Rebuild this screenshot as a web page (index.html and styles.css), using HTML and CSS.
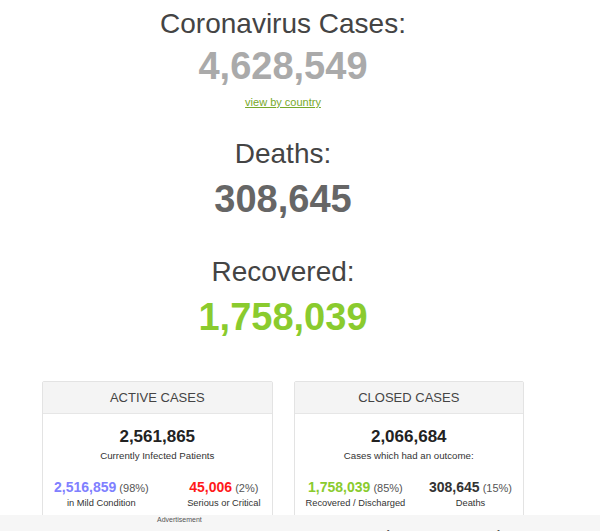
FILE: index.html
```html
<!DOCTYPE html>
<html lang="en">
<head>
<meta charset="utf-8">
<title>Coronavirus Cases</title>
<link rel="stylesheet" href="styles.css">
</head>
<body>
<main class="page">
  <section class="counter counter-cases">
    <h1 class="counter-title">Coronavirus Cases:</h1>
    <div class="counter-number number-cases">4,628,549</div>
    <a class="counter-link" href="#countries">view by country</a>
  </section>

  <section class="counter counter-deaths">
    <h1 class="counter-title">Deaths:</h1>
    <div class="counter-number number-deaths">308,645</div>
  </section>

  <section class="counter counter-recovered">
    <h1 class="counter-title">Recovered:</h1>
    <div class="counter-number number-recovered">1,758,039</div>
  </section>

  <div class="panels">
    <article class="panel">
      <header class="panel-head">ACTIVE CASES</header>
      <div class="panel-body">
        <div class="panel-total">2,561,865</div>
        <div class="panel-caption">Currently Infected Patients</div>
        <div class="panel-split">
          <div class="split-item">
            <div class="split-value"><span class="num num-mild">2,516,859</span> <span class="pct">(98%)</span></div>
            <div class="split-label">in Mild Condition</div>
          </div>
          <div class="split-item">
            <div class="split-value"><span class="num num-critical">45,006</span> <span class="pct">(2%)</span></div>
            <div class="split-label">Serious or Critical</div>
          </div>
        </div>
      </div>
    </article>

    <article class="panel">
      <header class="panel-head">CLOSED CASES</header>
      <div class="panel-body">
        <div class="panel-total">2,066,684</div>
        <div class="panel-caption">Cases which had an outcome:</div>
        <div class="panel-split">
          <div class="split-item">
            <div class="split-value"><span class="num num-recovered">1,758,039</span> <span class="pct">(85%)</span></div>
            <div class="split-label">Recovered / Discharged</div>
          </div>
          <div class="split-item">
            <div class="split-value"><span class="num num-deaths">308,645</span> <span class="pct">(15%)</span></div>
            <div class="split-label">Deaths</div>
          </div>
        </div>
      </div>
    </article>
  </div>
</main>

<aside class="ad-bar">
  <span class="ad-label">Advertisement</span>
  <span class="ad-headline">Join Our Newsletter</span>
</aside>
</body>
</html>
```

FILE: styles.css
```css
* {
  box-sizing: border-box;
}

html, body {
  margin: 0;
  padding: 0;
  background: #ffffff;
}

body {
  font-family: "Liberation Sans", Arial, sans-serif;
  color: #333333;
  overflow: hidden;
  height: 531px;
}

.page {
  width: 482px;
  margin-left: 42px;
  padding-top: 8px;
}

/* Main counters */
.counter {
  text-align: center;
}

.counter-title {
  margin: 0;
  font-size: 28px;
  line-height: 32px;
  font-weight: normal;
  color: #444444;
}

.counter-number {
  font-size: 38px;
  line-height: 44px;
  font-weight: bold;
  margin-top: 4px;
}

.number-cases {
  color: #aaaaaa;
}

.number-deaths {
  color: #666666;
  margin-top: 7px;
}

.number-recovered {
  color: #8acb2e;
  margin-top: 7px;
}

.counter-link {
  display: block;
  margin-top: 8px;
  font-size: 11px;
  line-height: 13px;
  color: #76a82a;
  text-decoration: underline;
}

.counter-deaths {
  margin-top: 29px;
}

.counter-recovered {
  margin-top: 35px;
}

/* Active / closed panels */
.panels {
  display: flex;
  gap: 21px;
  margin-top: 42px;
}

.panel {
  flex: 1;
  border: 1px solid #e3e3e3;
  border-radius: 2px;
  height: 160px;
}

.panel-head {
  height: 32px;
  background: #f4f4f4;
  border-bottom: 1px solid #e6e6e6;
  text-align: center;
  font-size: 13px;
  line-height: 31px;
  color: #444444;
}

.panel-body {
  text-align: center;
  padding: 13px 11px 0;
}

.panel-total {
  font-size: 17px;
  line-height: 20px;
  font-weight: bold;
  color: #222222;
}

.panel-caption {
  font-size: 9.7px;
  line-height: 14px;
  margin-top: 2px;
  color: #333333;
}

.panel-split {
  display: flex;
  justify-content: space-between;
  margin-top: 16px;
}

.split-item {
  text-align: center;
}

.split-value {
  font-size: 11px;
  line-height: 17px;
  color: #555555;
}

.num {
  font-size: 14px;
  font-weight: bold;
}

.num-mild {
  color: #8080ff;
}

.num-critical {
  color: #ff1a1a;
}

.num-recovered {
  color: #8acb2e;
}

.num-deaths {
  color: #333333;
}

.pct {
  font-size: 11px;
}

.split-label {
  font-size: 9.3px;
  line-height: 13px;
  color: #333333;
}

/* Bottom ad strip */
.ad-bar {
  position: fixed;
  left: 0;
  right: 0;
  bottom: 0;
  height: 16px;
  background: #f6f6f6;
  overflow: hidden;
}

.ad-label {
  position: absolute;
  left: 157px;
  top: 1px;
  font-size: 7px;
  line-height: 8px;
  color: #555555;
}

.ad-headline {
  position: absolute;
  left: 365px;
  top: 11px;
  font-size: 20px;
  line-height: 24px;
  color: #555555;
}
```
